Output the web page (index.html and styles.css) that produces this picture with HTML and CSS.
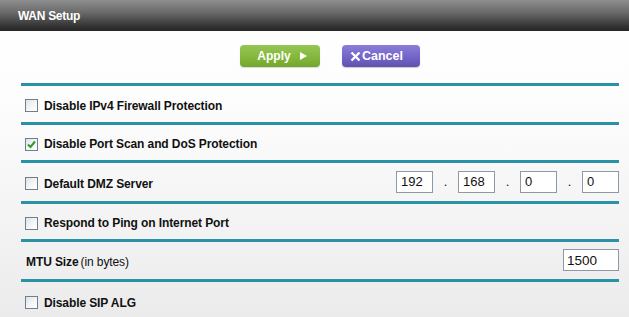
FILE: index.html
```html
<!DOCTYPE html>
<html>
<head>
<meta charset="utf-8">
<link rel="stylesheet" href="styles.css">
</head>
<body>
<div class="page">
  <div class="header"><span class="title">WAN Setup</span></div>
  <div class="actions">
    <button class="btn apply">Apply <span class="arrow"></span></button>
    <button class="btn cancel"><svg class="x" width="11" height="11" viewBox="0 0 11 11"><path d="M1.5 1.5 L9.5 9.5 M9.5 1.5 L1.5 9.5" stroke="#fff" stroke-width="2.4" stroke-linecap="butt"/></svg>Cancel</button>
  </div>
  <div class="rows">
    <div class="row r1"><span class="cb"></span><span class="label">Disable IPv4 Firewall Protection</span></div>
    <div class="row r2"><span class="cb checked"><svg width="11" height="11" viewBox="0 0 11 11"><path d="M2 5.5 L4.5 8 L9 2.5" fill="none" stroke="#2f9a2a" stroke-width="2"/></svg></span><span class="label">Disable Port Scan and DoS Protection</span></div>
    <div class="row r3"><span class="cb"></span><span class="label">Default DMZ Server</span>
      <div class="ip">
        <span class="field">192</span><span class="dot">.</span>
        <span class="field">168</span><span class="dot">.</span>
        <span class="field">0</span><span class="dot">.</span>
        <span class="field">0</span>
      </div>
    </div>
    <div class="row r4"><span class="cb"></span><span class="label">Respond to Ping on Internet Port</span></div>
    <div class="row r5 mtu"><span class="label"><b>MTU Size</b><span class="norm">(in bytes)</span></span><span class="field wide">1500</span></div>
    <div class="row r6"><span class="cb"></span><span class="label">Disable SIP ALG</span></div>
  </div>
</div>
</body>
</html>
```

FILE: styles.css
```css
html, body {
  margin: 0;
  padding: 0;
}
body {
  width: 629px;
  height: 317px;
  overflow: hidden;
  font-family: "Liberation Sans", Arial, sans-serif;
  background: linear-gradient(to bottom, #ffffff 0px, #fdfdfd 100px, #f1f1f1 250px, #ebebeb 317px);
}
.header {
  height: 31px;
  background: linear-gradient(to bottom, #8e8e8e 0%, #6a6a6a 40%, #333 85%, #262626 100%);
  display: flex;
  align-items: center;
  padding-left: 18px;
}
.title {
  color: #fff;
  font-weight: bold;
  font-size: 12px;
  letter-spacing: -0.3px;
}
.actions {
  height: 52px;
  display: flex;
  justify-content: center;
  align-items: flex-start;
  padding-top: 14px;
  box-sizing: border-box;
  gap: 22px;
  padding-left: 31px;
}
.btn {
  border: none;
  height: 22px;
  width: 80px;
  border-radius: 4px;
  color: #fff;
  font-family: "Liberation Sans", Arial, sans-serif;
  font-weight: bold;
  font-size: 12px;
  display: flex;
  align-items: center;
  justify-content: center;
  padding: 0;
}
.apply {
  background: linear-gradient(to bottom, #96c553 0%, #86b93f 50%, #74a62d 100%);
  box-shadow: 0 1px 1px rgba(0,0,0,0.15);
  padding-left: 4px;
}
.arrow {
  display: inline-block;
  width: 0;
  height: 0;
  border-left: 7px solid #fff;
  border-top: 4.5px solid transparent;
  border-bottom: 4.5px solid transparent;
  margin-left: 9px;
}
.cancel {
  width: 78px;
  background: linear-gradient(to bottom, #8a7ed8 0%, #7567c9 50%, #5f52b0 100%);
  box-shadow: 0 1px 1px rgba(0,0,0,0.2);
  justify-content: flex-start;
  padding-left: 8px;
  font-size: 12.5px;
}
.x {
  margin-right: 1px;
}
.rows {
  margin: 0 10px 0 21px;
}
.row {
  border-top: 3px solid #2a92a6;
  box-sizing: content-box;
  display: flex;
  align-items: center;
  font-size: 12px;
  color: #111;
  padding-top: 3px;
}
.r1 { height: 33px; }
.r2 { height: 32px; }
.r3 { height: 35px; padding-top: 3px; }
.r3 .ip { margin-top: -4px; }
.r4 { height: 32px; }
.r5 { height: 34px; }
.r6 { height: 35px; }
.cb {
  width: 11px;
  height: 11px;
  border: 1px solid #6f7f90;
  background: linear-gradient(135deg, #dfe3e8 0%, #f7f7f7 60%, #ffffff 100%);
  margin-left: 4px;
  margin-right: 6px;
  display: flex;
  align-items: center;
  justify-content: center;
}
.label {
  font-weight: bold;
  letter-spacing: -0.1px;
}
.norm {
  font-weight: normal;
  margin-left: 2px;
}
.mtu .label {
  margin-left: 5px;
}
.ip {
  margin-left: auto;
  display: flex;
  align-items: center;
}
.field {
  box-sizing: border-box;
  width: 37px;
  height: 22px;
  border: 1px solid #8c9aa6;
  background: #fff;
  font-size: 13px;
  font-family: "Liberation Sans", Arial, sans-serif;
  display: flex;
  align-items: center;
  padding-left: 4px;
  color: #111;
}
.dot {
  width: 25px;
  text-align: center;
  font-size: 13px;
}
.field.wide {
  margin-left: auto;
  width: 56px;
  padding-left: 3px;
  font-size: 13.5px;
}
.mtu .field.wide { margin-top: -4px; }
```
